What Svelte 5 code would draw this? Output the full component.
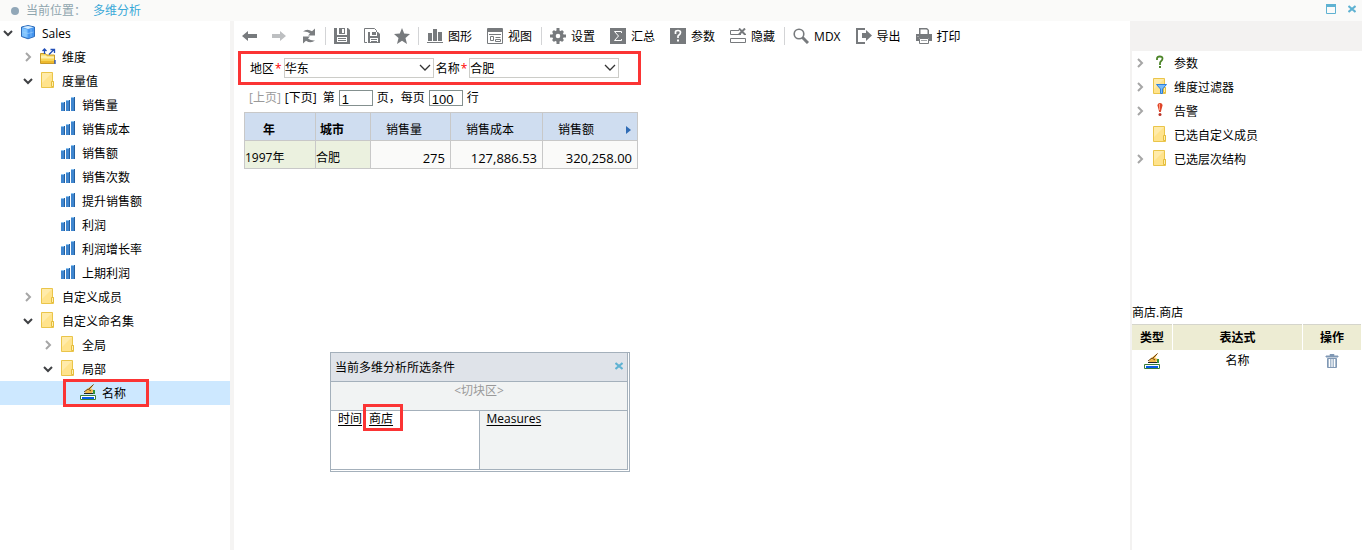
<script>
  let nodes = $state([
    { label: "Sales", icon: "cube", level: 0, open: true },
    { label: "维度", icon: "dimension", level: 1, open: false },
    { label: "度量值", icon: "folder", level: 1, open: true },
    { label: "销售量", icon: "measure", level: 2 },
    { label: "销售成本", icon: "measure", level: 2 },
    { label: "销售额", icon: "measure", level: 2 },
    { label: "销售次数", icon: "measure", level: 2 },
    { label: "提升销售额", icon: "measure", level: 2 },
    { label: "利润", icon: "measure", level: 2 },
    { label: "利润增长率", icon: "measure", level: 2 },
    { label: "上期利润", icon: "measure", level: 2 },
    { label: "自定义成员", icon: "folder", level: 1, open: false },
    { label: "自定义命名集", icon: "folder", level: 1, open: true },
    { label: "全局", icon: "folder", level: 2, open: false },
    { label: "局部", icon: "folder", level: 2, open: true },
    { label: "名称", icon: "namedset", level: 3, selected: true, marked: true },
  ]);

  let selections = $state([
    { label: "参数", icon: "question", level: 0, open: false },
    { label: "维度过滤器", icon: "filter", level: 0, open: false },
    { label: "告警", icon: "alert", level: 0, open: false },
    { label: "已选自定义成员", icon: "folder", level: 0 },
    { label: "已选层次结构", icon: "folder", level: 0, open: false },
  ]);

  const tools = [
    [
      { icon: "back", title: "后退" },
      { icon: "forward", title: "前进" },
      { icon: "refresh", title: "刷新" },
    ],
    [
      { icon: "save", title: "保存" },
      { icon: "saveas", title: "另存为" },
      { icon: "star", title: "收藏" },
    ],
    [
      { icon: "chart", label: "图形" },
      { icon: "view", label: "视图" },
    ],
    [
      { icon: "gear", label: "设置" },
      { icon: "sum", label: "汇总" },
      { icon: "param", label: "参数" },
      { icon: "hide", label: "隐藏" },
    ],
    [
      { icon: "search", label: "MDX" },
      { icon: "export", label: "导出" },
      { icon: "print", label: "打印" },
    ],
  ];

  let region = $state("华东");
  let city = $state("合肥");
  let page = $state("1");
  let pageSize = $state("100");
</script>

{#snippet icon(name)}
  <svg class="icon" width="16" height="16" viewBox="0 0 16 16" aria-hidden="true">
    {#if name === "cube"}
      <path d="M1.500 3 8 1.500 14.500 3v9.500L8 14.800 1.500 12.500z" fill="#4f9df2" stroke="#2f6dbb" />
      <path d="M2.500 3.300 8 2l5.500 1.300L8 5z" fill="#d3ecff" />
      <path d="M2 4 7.500 5.500v8L2 12z" fill="#7cc2ff" />
      <path d="M8.500 5.500 14 4v8l-5.500 1.800z" fill="#4495f0" />
      <path d="M5 4.800V13M2.500 8 8 9.500 13.500 8M11 4.800V13" fill="none" stroke="#9fd2fb" stroke-width=".6" />
    {:else if name === "dimension"}
      <path d="M.5 5.500h5l1 1.500h8v8.500H.5z" fill="#f8d557" stroke="#c89a2a" />
      <path d="M1 7.500h5l1 1h7v2H1z" fill="#fff1b0" />
      <path d="M1 13h13v2H1z" fill="#edb92e" />
      <path d="M4.500 6V1M2.500 3l2-2 2 2M9 6.500l5-5M10.500 1.500h4V5M15 12v4" fill="none" stroke="#2450b8" stroke-width="1.300" />
    {:else if name === "folder" || name === "filter"}
      <path d="M1.500.5h11v9h1v6h-12z" fill="#ffe38c" stroke="#eac54a" />
      <path d="M2 1h10L2 11z" fill="#ffebaa" />
      <path d="M11.500 9.500h2v5h-2z" fill="#fff0b0" stroke="#e5bd3c" />
      {#if name === "filter"}
        <path d="M4.500 6.500h10L10.500 11v4.500h-2V11z" fill="#79bbfa" stroke="#2f80dd" />
      {/if}
    {:else if name === "measure"}
      <path d="M1 6h4v9H1zM6 4h4v11H6zM11 1h4v14h-4z" fill="#3f86cf" />
      <path d="M4 6h1v9H4zM9 4h1v11H9zM14 1h1v14h-1z" fill="#245f9f" />
      <path d="M1 6h3v1H1zM6 4h3v1H6zM11 1h3v1h-3z" fill="#8cc4f2" />
    {:else if name === "namedset"}
      <path d="M.5 11.500h15v4H.5z" fill="#fff" stroke="#3a7d3c" />
      <path d="M2 13h12v2H2z" fill="#075de8" />
      <path d="M6 6 11 2l3-2-3 5 3 1-2 3H5z" fill="#f0ba4c" />
      <path d="M9 5 13.500 .5M4 8l4-3 3 2" fill="none" stroke="#6c4315" />
      <path d="M4 9.500h9" stroke="#222" />
      <path d="M13 6h2v4h-2z" fill="#31923b" />
    {:else if name === "question"}
      <path d="M5 6V4.500q0-2 2.800-2t2.700 2q0 1.500-1.300 2.500T8 9.500V11" fill="none" stroke="#4c8428" stroke-width="1.800" />
      <path d="M7 12h2v2H7z" fill="#4c8428" />
    {:else if name === "alert"}
      <path d="M5.500 3.500q0-2.500 2.500-2.500t2.500 2.500L8.800 10H7.200z" fill="#df4529" />
      <path d="M7 2h1v6H7z" fill="#ff9a7e" />
      <circle cx="8" cy="12.500" r="1.500" fill="#b93327" />
    {:else if name === "back" || name === "forward"}
      <path d={name === "back" ? "M1 8l6-5v3h9v4H7v3z" : "M15 8 9 3v3H1v4h8v3z"} fill={name === "back" ? "#777a7d" : "#bdbfc1"} />
    {:else if name === "refresh"}
      <path d="M2 3.500Q6 0 11 3.200L14 .5V7.500H7L9 5.500Q6 3 2 3.500z" fill="#7b7e81" />
      <path d="M14 12.500Q10 16 5 12.800L2 15.500V8.500H9l-2 2Q10 13 14 12.500z" fill="#7b7e81" />
    {:else if name === "save"}
      <path d="M0 0h3v7h10V0h1l2 2v14H0z" fill="#777a7d" />
      <path d="M5 0h6v6H5z" fill="#777a7d" />
      <path d="M8 1h2v4H8zM3 9h10v5H3z" fill="#fff" />
      <path d="M4 10h8v1H4zM4 12h8v1H4z" fill="#777a7d" />
    {:else if name === "saveas"}
      <path d="M3 14.500H.5V.5h10l2 2V4" fill="none" stroke="#777a7d" />
      <path d="M4 4h10l2 2v9H4z" fill="#777a7d" />
      <path d="M6 4h7v4H6zM6 10h8v4H6z" fill="#fff" />
      <path d="M8 4h4v3H8zM7 11h6v1H7zM7 13h6v1H7z" fill="#777a7d" />
    {:else if name === "star"}
      <path d="M8 0l2.200 5.500L16 6l-4.500 4L13 16l-5-3.200L3 16l1.500-6L0 6l5.800-.5z" fill="#777a7d" />
    {:else if name === "chart"}
      <path d="M1 5h4v8H1zM6 1h4v12H6zM11 4h4v9h-4zM0 14h16v1H0z" fill="#777a7d" />
    {:else if name === "view"}
      <path d="M.5.5h15v15H.5z" fill="#fff" stroke="#777a7d" />
      <path d="M1 1h14v3H1z" fill="#777a7d" />
      <path d="M2 6.500h12M3.500 8.500v4h3v-4zM8.500 9.500h5M8.500 11.500h5v2h-5z" fill="none" stroke="#777a7d" />
    {:else if name === "gear"}
      <path d="M6.500 0h3v3h-3zM6.500 13h3v3h-3zM0 6.500h3v3H0zM13 6.500h3v3h-3zM2 4l2-2 2 2-2 2zM10 4l2-2 2 2-2 2zM2 12l2-2 2 2-2 2zM10 12l2-2 2 2-2 2z" fill="#777a7d" />
      <circle cx="8" cy="8" r="4" fill="#fff" stroke="#777a7d" stroke-width="3.400" />
    {:else if name === "sum"}
      <path d="M0 0h16v16H0z" fill="#777a7d" />
      <path d="M11.500 5V3.500h-7L8.500 8l-4 4.500h7V11" fill="none" stroke="#fff" />
    {:else if name === "param"}
      <path d="M0 0h16v16H0z" fill="#777a7d" />
      <path d="M5.500 6V4q0-1.500 2.500-1.500t2.500 2Q10.500 6 9 7T8 9v1" fill="none" stroke="#fff" stroke-width="1.700" />
      <path d="M7 11.500h2v2H7z" fill="#fff" />
    {:else if name === "hide"}
      <path d="M9 2.500H.5v4H11M.5 10.500h15v4H.5zM14 6.500h2" fill="none" stroke="#777a7d" />
      <path d="M9 .5l6 6M15 .5l-6 6" stroke="#777a7d" stroke-width="2" />
    {:else if name === "search"}
      <circle cx="6" cy="6" r="4.800" fill="none" stroke="#777a7d" stroke-width="1.600" />
      <path d="M9.500 9.500 15 15" stroke="#777a7d" stroke-width="3" />
    {:else if name === "export"}
      <path d="M9 1H1v14h8" fill="none" stroke="#777a7d" stroke-width="2" />
      <path d="M6 5h4V2l6 5.500-6 5.500v-3H6z" fill="#777a7d" />
    {:else if name === "print"}
      <path d="M3 0h8l2 2v4H3zM0 6h16v7h-3v-3H3v3H0z" fill="#777a7d" />
      <path d="M4.500 1.500h6l1 1V6h-7z" fill="#fff" />
      <path d="M3.500 10.500h9v5h-9z" fill="#fff" stroke="#777a7d" />
      <path d="M5 12.500h6M1 8.500h2" stroke="#a4a7a9" />
    {:else if name === "trash"}
      <path d="M2 3h12v1H2zM6 1.500h4v1H6z" fill="#8098b4" stroke="#8098b4" />
      <path d="M3.500 5.500h9v9h-9z" fill="#a8bacd" stroke="#8098b4" />
      <path d="M5.500 6v8M8 6v8M10.500 6v8" stroke="#fff" />
    {/if}
  </svg>
{/snippet}

{#snippet closeIcon()}
  <svg width="8" height="8" viewBox="0 0 8 8" aria-hidden="true">
    <path d="M.5 1l7 6M7.500 1l-7 6" stroke="#5fb2d2" stroke-width="2" />
  </svg>
{/snippet}

{#snippet tree(items)}
  <ul class="tree">
    {#each items as node}
      <li class:selected={node.selected} style:padding-left="{node.level * 20}px">
        {#if node.open !== undefined}
          <button
            type="button"
            class="toggle"
            aria-label={node.label}
            aria-expanded={node.open}
            onclick={() => (node.open = !node.open)}>
            <svg width="10" height="10" viewBox="0 0 10 10" aria-hidden="true">
              {#if node.open}
                <path d="M1 3l4 4 4-4" fill="none" stroke="#3f4144" stroke-width="2" />
              {:else}
                <path d="M3 1l4 4-4 4" fill="none" stroke="#a6a6a6" stroke-width="2" />
              {/if}
            </svg>
          </button>
        {:else}
          <span class="toggle"></span>
        {/if}
        <span class="node">
          {@render icon(node.icon)}
          <span class="text">{node.label}</span>
          {#if node.marked}
            <span class="mark"></span>
          {/if}
        </span>
      </li>
    {/each}
  </ul>
{/snippet}

{#snippet arrow()}
  <svg class="arrow" width="12" height="8" viewBox="0 0 12 8" aria-hidden="true">
    <path d="M1 1l5 5 5-5" fill="none" stroke="#333" stroke-width="1.300" />
  </svg>
{/snippet}

<div class="app">
  <header>
    <span class="dot"></span>
    <span>当前位置：</span>
    <a href="#analysis">多维分析</a>
    <div class="window-buttons">
      <button type="button" aria-label="最大化">
        <svg width="10" height="10" viewBox="0 0 10 10" aria-hidden="true">
          <path d="M.5.5h9v9h-9z" fill="none" stroke="#5fb2d2" />
          <path d="M0 0h10v3H0z" fill="#5fb2d2" />
        </svg>
      </button>
      <button type="button" aria-label="关闭">{@render closeIcon()}</button>
    </div>
  </header>

  <div class="body">
    <aside class="left">
      {@render tree(nodes)}
    </aside>

    <main>
      <div class="toolbar">
        {#each tools as group, i}
          {#if i > 0}
            <span class="separator"></span>
          {/if}
          {#each group as tool}
            <button type="button" class:labelled={tool.label} aria-label={tool.label ?? tool.title}>
              {@render icon(tool.icon)}
              {#if tool.label}
                <span class="text">{tool.label}</span>
              {/if}
            </button>
          {/each}
        {/each}
      </div>

      <form class="prompts">
        <label for="region" class="text">地区<em>*</em></label>
        <span class="select">
          <select id="region" bind:value={region}>
            <option>华东</option>
            <option>华北</option>
          </select>
          {@render arrow()}
        </span>
        <label for="city" class="text">名称<em>*</em></label>
        <span class="select">
          <select id="city" bind:value={city}>
            <option>合肥</option>
            <option>南京</option>
          </select>
          {@render arrow()}
        </span>
      </form>

      <div class="pager">
        <button type="button" disabled>[上页]</button>
        <button type="button">[下页]</button>
        <label for="page">第</label>
        <input id="page" bind:value={page} />
        <label for="size">页，每页</label>
        <input id="size" bind:value={pageSize} />
        <span>行</span>
      </div>

      <table class="grid">
        <colgroup>
          <col class="year" />
          <col class="city" />
          <col class="count" />
          <col class="cost" />
          <col class="sales" />
        </colgroup>
        <thead>
          <tr>
            <th class="dim year-head">年</th>
            <th class="dim">城市</th>
            <th>销售量</th>
            <th>销售成本</th>
            <th>
              <div class="sort">
                <span>销售额</span>
                <svg width="5" height="8" viewBox="0 0 5 8" aria-hidden="true">
                  <path d="M0 0l5 4-5 4z" fill="#2f6bb5" />
                </svg>
              </div>
            </th>
          </tr>
        </thead>
        <tbody>
          <tr>
            <td class="member">1997年</td>
            <td class="member">合肥</td>
            <td>275</td>
            <td>127,886.53</td>
            <td>320,258.00</td>
          </tr>
        </tbody>
      </table>
    </main>

    <aside class="right">
      <div class="blank"></div>
      <div class="selections">
        {@render tree(selections)}
      </div>
      <div class="path">商店.商店</div>
      <table class="expressions">
        <thead>
          <tr>
            <th class="type">类型</th>
            <th>表达式</th>
            <th class="action">操作</th>
          </tr>
        </thead>
        <tbody>
          <tr>
            <td>{@render icon("namedset")}</td>
            <td>名称</td>
            <td>
              <button type="button" aria-label="删除">{@render icon("trash")}</button>
            </td>
          </tr>
        </tbody>
      </table>
    </aside>
  </div>

  <section class="dialog">
    <div class="inner">
      <div class="title">
        <span class="text">当前多维分析所选条件</span>
        <button type="button" aria-label="关闭">{@render closeIcon()}</button>
      </div>
      <div class="slicer text">&lt;切块区&gt;</div>
      <div class="axes">
        <div class="axis rows">
          <a href="#time">时间</a>
          <a class="marked" href="#store">商店<span class="mark"></span></a>
        </div>
        <div class="axis columns">
          <a href="#measures">Measures</a>
        </div>
      </div>
    </div>
  </section>
</div>

<style>
  :global(body) {
    background: #fff;
  }

  .app {
    position: relative;
    display: flex;
    flex-direction: column;
    min-height: 100vh;
    font: 12px/16px "Open Sans", "Noto Sans CJK SC", sans-serif;
    color: #000;
  }

  button {
    display: flex;
    align-items: center;
    padding: 0;
    border: 0;
    background: none;
    font: inherit;
    color: inherit;
    cursor: pointer;
  }

  svg {
    display: block;
    flex: none;
  }

  .text {
    padding-top: 2px;
  }

  header {
    display: flex;
    align-items: center;
    height: 21px;
    padding: 0 6px 0 11px;
    box-sizing: border-box;
    background: #fafaf9;
    color: #8fa5ae;
  }

  .dot {
    width: 8px;
    height: 8px;
    margin-right: 7px;
    border-radius: 50%;
    background: #91a7b8;
  }

  header a {
    margin-left: 7px;
    color: #3ba9d8;
    text-decoration: none;
  }

  .window-buttons {
    display: flex;
    gap: 12px;
    margin: 0 0 4px auto;
  }

  .body {
    display: flex;
    flex: 1;
  }

  .left {
    width: 230px;
    border-right: 4px solid #f5f4f3;
  }

  main {
    flex: 1;
    min-width: 0;
  }

  .right {
    width: 230px;
    border-left: 2px solid #f3f2f1;
  }

  /* trees */
  .tree {
    margin: 0;
    padding: 0;
    list-style: none;
  }

  .tree li {
    display: flex;
    align-items: center;
    height: 24px;
  }

  .tree li.selected {
    background: #cde8ff;
  }

  .toggle {
    width: 20px;
    padding-left: 3px;
    box-sizing: border-box;
  }

  .node {
    position: relative;
    display: flex;
    align-items: center;
    gap: 6px;
  }

  .node .icon {
    margin-bottom: 2px;
  }

  .mark {
    position: absolute;
    inset: -5px -23px -5px -17px;
    border: 3px solid #fb3434;
  }

  /* toolbar */
  .toolbar {
    display: flex;
    height: 30px;
  }

  .toolbar button {
    gap: 5px;
    padding: 0 7px;
  }

  .toolbar button.labelled {
    padding-right: 8px;
  }

  .separator {
    width: 1px;
    height: 18px;
    margin: 6px 1px;
    background: #d3d4d6;
  }

  .prompts {
    display: flex;
    align-items: center;
    gap: 2px;
    width: 403px;
    height: 34px;
    margin-left: 4px;
    padding-left: 9px;
    box-sizing: border-box;
    border: 3px solid #fb3434;
  }

  .prompts em {
    margin-left: 1px;
    color: #f00;
    font-style: normal;
  }

  .select {
    display: grid;
    align-items: center;
  }

  .select > :global(*) {
    grid-area: 1 / 1;
  }

  select {
    width: 150px;
    height: 20px;
    padding: 2px 0 0;
    border: 1px solid #ccccc8;
    border-radius: 0;
    appearance: none;
    background: #fff;
    font: inherit;
    color: inherit;
  }

  .arrow {
    justify-self: end;
    margin-right: 3px;
    pointer-events: none;
  }

  .pager {
    display: flex;
    align-items: center;
    gap: 4px;
    height: 26px;
    padding-left: 15px;
  }

  .pager button:disabled {
    color: #9a9a9a;
  }

  .pager label[for="page"] {
    margin-left: 2px;
  }

  .pager input {
    width: 34px;
    height: 16px;
    padding: 2px 2px 0;
    box-sizing: border-box;
    border: 1px solid #84908f;
    font: 13px/14px "Liberation Sans", sans-serif;
  }

  /* result grid */
  .grid {
    width: 394px;
    margin: 1px 0 0 10px;
    border-collapse: collapse;
    table-layout: fixed;
  }

  .year {
    width: 71px;
  }

  .city {
    width: 55px;
  }

  .count {
    width: 80px;
  }

  .cost {
    width: 92px;
  }

  .grid th,
  .grid td {
    height: 20px;
    padding: 7px 5px 0;
    border: 1px solid #c8c8c8;
  }

  .grid th {
    padding: 7px 15px 0;
    background: #cfddf0;
    font-weight: 400;
    text-align: left;
    white-space: nowrap;
  }

  .grid th.dim {
    padding: 7px 4px 0;
    font-weight: 700;
  }

  .grid th.year-head {
    padding-left: 18px;
  }

  .grid td {
    background: #fafaf9;
    font-size: 13px;
    text-align: right;
  }

  .grid td.member {
    padding: 7px 0 0;
    background: #ebf1df;
    font-size: 12px;
    text-align: left;
  }

  .sort {
    display: flex;
    align-items: center;
    justify-content: space-between;
    margin-right: -9px;
  }

  /* right panel */
  .blank {
    height: 30px;
    background: #f3f2f1;
  }

  .selections {
    min-height: 253px;
  }

  .path {
    height: 20px;
    line-height: 18px;
  }

  .expressions {
    width: 100%;
    border-top: 1px solid #d5d5cc;
    border-collapse: collapse;
    text-align: center;
  }

  .expressions th {
    height: 25px;
    padding: 0;
    border-right: 1px solid #fff;
    background: #edecd3;
  }

  .expressions td {
    height: 22px;
    padding: 0;
  }

  .expressions .type {
    width: 40px;
  }

  .expressions .action {
    width: 58px;
  }

  .expressions td .icon {
    margin: 0 auto;
  }

  .expressions button {
    margin: 0 auto;
  }

  /* floating axis dialog */
  .dialog {
    position: absolute;
    top: 352px;
    left: 330px;
    width: 300px;
    box-sizing: border-box;
    padding: 0 1px 1px 0;
    border: 1px solid #a4b0bb;
    background: #fff;
  }

  .inner {
    border: solid #a4b0bb;
    border-width: 0 1px 1px 0;
  }

  .title {
    display: flex;
    align-items: center;
    justify-content: space-between;
    height: 28px;
    padding: 0 4px;
    border-bottom: 1px solid #a4b0bb;
    background: #dfe3e9;
  }

  .title button {
    margin-bottom: 3px;
  }

  .slicer {
    height: 28px;
    padding-top: 1px;
    box-sizing: border-box;
    border-bottom: 1px solid #a4b0bb;
    background: #f1f3f3;
    color: #999;
    text-align: center;
  }

  .slicer.text {
    height: 29px;
  }

  .axes {
    display: flex;
    height: 58px;
  }

  .axis {
    flex: 1;
    display: flex;
    gap: 7px;
    padding: 0 7px;
    box-sizing: border-box;
  }

  .axis a {
    height: 16px;
    color: inherit;
    text-underline-offset: 2px;
  }

  .columns {
    border-left: 1px solid #a4b0bb;
    background: #f1f3f3;
  }

  .marked {
    position: relative;
  }

  .marked .mark {
    inset: -7px -10px -4px -6px;
  }
</style>
